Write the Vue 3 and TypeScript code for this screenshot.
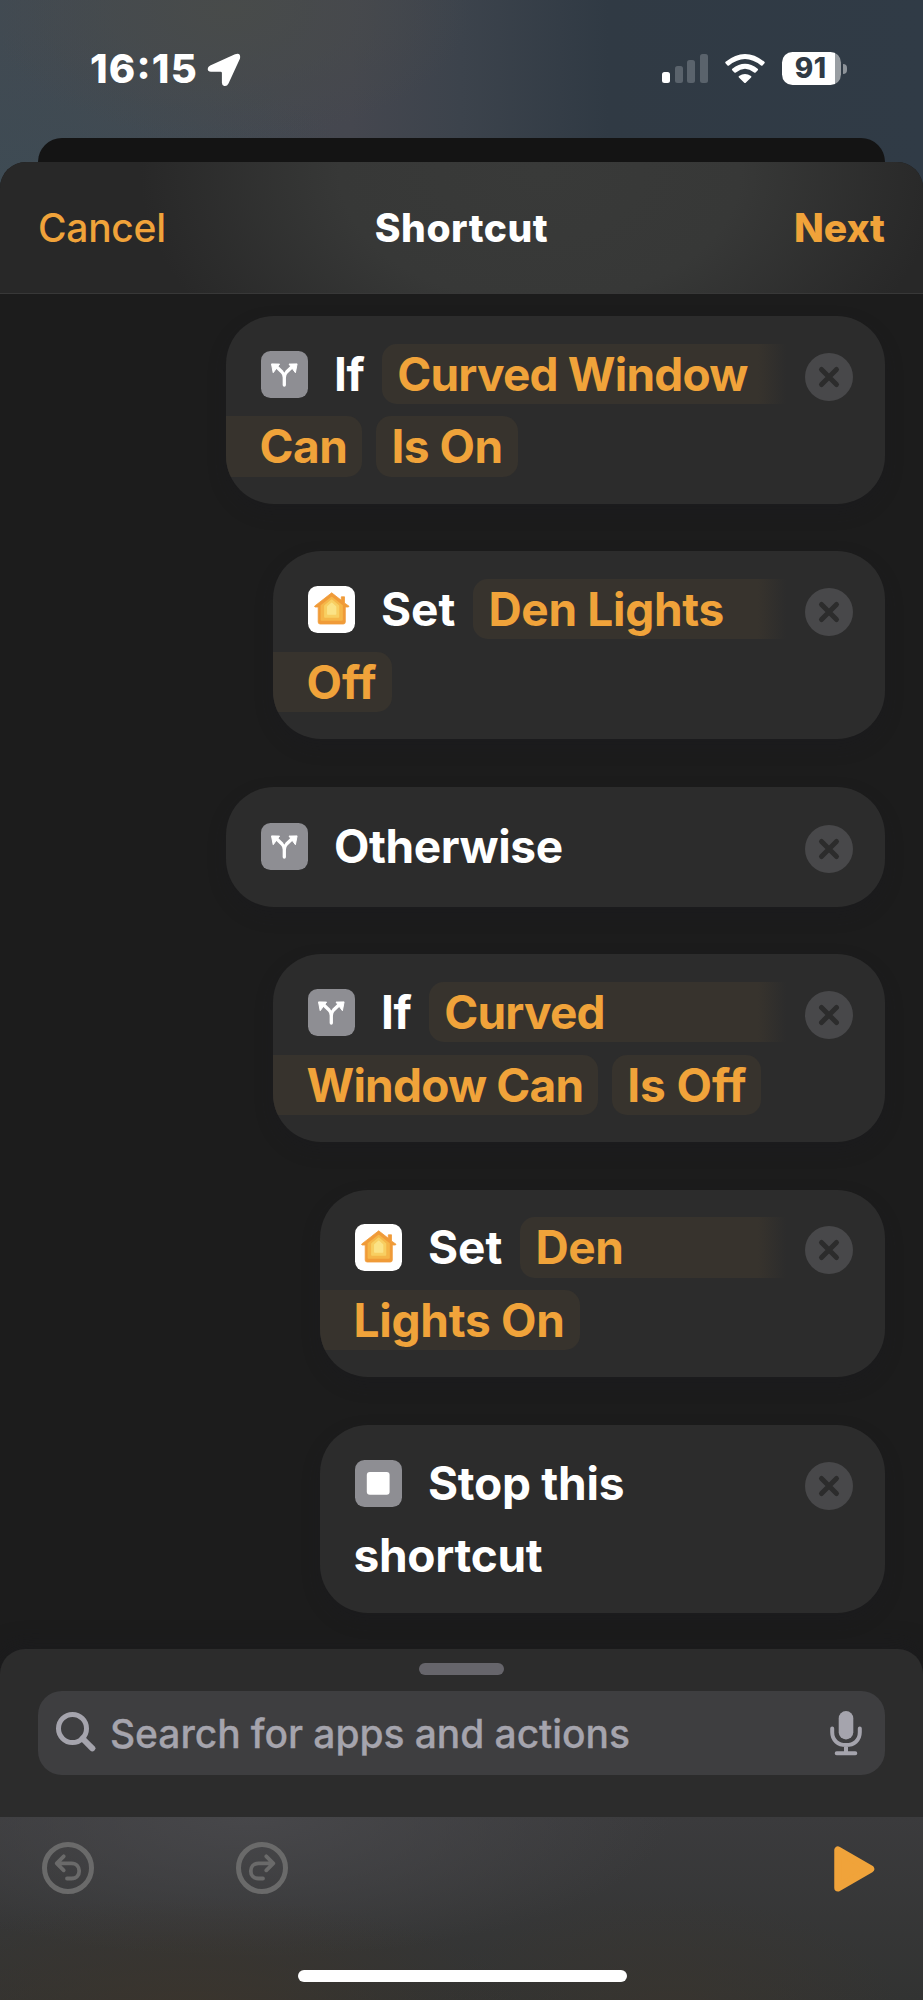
<script setup lang="ts">
interface Phrase { text: string; track: number }
interface Card {
  icon: 'branch' | 'home' | 'stop'
  level: number
  label: Phrase
  first?: Phrase
  second?: Phrase
  plain?: Phrase
  tail?: Phrase
}

const p = (text: string, track: number): Phrase => ({ text, track })

const cards: Card[] = [
  { icon: 'branch', level: 0, label: p('If', -0.5), first: p('Curved Window', -0.8), second: p('Can', -0.5), tail: p('Is On', -0.5) },
  { icon: 'home', level: 1, label: p('Set', 0), first: p('Den Lights', -0.3), second: p('Off', 0) },
  { icon: 'branch', level: 0, label: p('Otherwise', -0.4) },
  { icon: 'branch', level: 1, label: p('If', -0.5), first: p('Curved', -0.8), second: p('Window Can', -0.8), tail: p('Is Off', -0.1) },
  { icon: 'home', level: 2, label: p('Set', 0), first: p('Den', -0.4), second: p('Lights On', -0.25) },
  { icon: 'stop', level: 2, label: p('Stop this', -0.25), plain: p('shortcut', -0.3) },
]
const bars = [11, 17, 23, 29]
const spacing = (x: Phrase) => ({ letterSpacing: x.track + 'px' })
</script>

<template>
  <div class="screen">
    <div class="status">
      <span class="time">16:15</span>
      <svg class="loc" viewBox="0 0 34 34"><path d="M3.200 12.500 28 1.200Q34-1 33 5.400L21.500 30.500Q20 33.600 17.200 33 14.900 32.400 14.900 29.800V20Q14.900 18.800 13.700 18.800H4Q.8 18.600.7 16 .7 13.800 3.200 12.500Z" fill="#fff"/></svg>
      <div class="signal"><i v-for="(h, i) in bars" :key="h" :class="{ on: i === 0 }" :style="{ height: h + 'px' }"></i></div>
      <svg class="wifi" viewBox="0 0 40 29">
        <path d="M.6 7.800Q20-7.800 39.400 7.800 40.200 8.500 39.500 9.300L37.500 11.400Q36.800 12 36 11.400 20-1.600 4 11.400 3.200 12 2.500 11.400L.5 9.300Q-.2 8.500.6 7.800Z" fill="#fff"/>
        <path d="M7.300 14.800Q20 4.800 32.700 14.800 33.500 15.500 32.800 16.300L30.600 18.400Q29.900 19 29.100 18.400 20 11.200 10.900 18.400 10.100 19 9.400 18.400L7.200 16.300Q6.500 15.500 7.300 14.800Z" fill="#fff"/>
        <path d="M14 21.900Q20 18 26 21.900 26.800 22.600 26.100 23.400L21 28.400Q20 29.400 19 28.400L13.900 23.400Q13.200 22.600 14 21.900Z" fill="#fff"/>
      </svg>
      <div class="battery"><span>91</span></div>
      <i class="nub"></i>
    </div>
    <div class="behind"></div>
    <main class="sheet">
      <header class="nav">
        <span class="cancel">Cancel</span>
        <span class="title">Shortcut</span>
        <span class="next">Next</span>
      </header>

      <section class="flow">
        <article v-for="(c, n) in cards" :key="n" class="card" :class="['l' + c.level, { short: !c.second && !c.plain }]">
          <div class="row">
            <svg class="icon" viewBox="0 0 47 47">
              <template v-if="c.icon === 'branch'">
                <rect width="47" height="47" rx="9.500" fill="#8e8e93"/>
                <path d="M23.300 34V26.500Q23.300 23.500 21 21L15 15.300M23.300 26.500Q23.300 23.500 25.600 21L31.600 15.300" fill="none" stroke="#fff" stroke-width="3.300" stroke-linecap="round"/>
                <path d="M10.500 12.900 18.600 13.100 12.200 21.700ZM36.100 12.900 28 13.100 34.400 21.700Z" fill="#fff" stroke="#fff" stroke-width="1" stroke-linejoin="round"/>
              </template>
              <template v-else-if="c.icon === 'home'">
                <rect width="47" height="47" rx="9.500" fill="#fff"/>
                <path d="M33.300 10.800H36.500V17L41 20.200 40.500 21H37.300V36Q37.300 38 35.300 38H12.200Q10.200 38 10.200 36V21H7L6.500 20.200 23.700 6.800 33.300 14.300Z" fill="#f09b38" stroke="#f09b38" stroke-width=".8" stroke-linejoin="round"/>
                <path d="M23.700 11.800 33.800 19.700V33.800H13.600V19.700Z" fill="#f5b648" stroke="#f5b648" stroke-width="2" stroke-linejoin="round"/>
                <path d="M23.700 14.200 30.500 19.800V31H16.900V19.800Z" fill="#f8cf62" stroke="#f8cf62" stroke-width="1.500" stroke-linejoin="round"/>
                <path d="M23.700 17.200 27.600 20.800V28H19.800V20.800Z" fill="#fbe386" stroke="#fbe386" stroke-width="1.500" stroke-linejoin="round"/>
              </template>
              <template v-else>
                <rect width="47" height="47" rx="9.500" fill="#8e8e93"/>
                <rect x="11.800" y="12" width="22.800" height="22.800" rx="3" fill="#fff"/>
              </template>
            </svg>
            <span class="label" :style="spacing(c.label)">{{ c.label.text }}</span>
            <span v-if="c.first" class="tag open" :style="spacing(c.first)">{{ c.first.text }}</span>
            <svg class="remove" viewBox="0 0 48 48"><circle cx="24" cy="24" r="24" fill="#48484a"/><path d="M16.500 16.500 31.500 31.500M31.500 16.500 16.500 31.500" stroke="#2c2c2c" stroke-width="5" stroke-linecap="round"/></svg>
          </div>
          <div v-if="c.second" class="row">
            <span class="tag close" :style="spacing(c.second)">{{ c.second.text }}</span>
            <span v-if="c.tail" class="tag" :style="spacing(c.tail)">{{ c.tail.text }}</span>
          </div>
          <div v-if="c.plain" class="row"><span class="plain" :style="spacing(c.plain)">{{ c.plain.text }}</span></div>
        </article>
      </section>

      <section class="drawer">
        <i class="handle"></i>
        <div class="search">
          <svg class="glass" viewBox="0 0 40 40"><circle cx="16.500" cy="16.500" r="14" fill="none" stroke="#a5a4ad" stroke-width="5"/><path d="M26.500 26.500 36.300 36.300" stroke="#a5a4ad" stroke-width="6" stroke-linecap="round"/></svg>
          <span class="hint">Search for apps and actions</span>
          <svg class="mic" viewBox="0 0 32 45"><rect x="8.700" y="0" width="14.600" height="28.500" rx="7.300" fill="#a5a4ad"/><path d="M2.200 17.500V21.300C2.200 29.300 8 34 16 34S29.800 29.300 29.800 21.300V17.500M16 34V41M6.700 42.200H25.300" fill="none" stroke="#a5a4ad" stroke-width="4" stroke-linecap="round"/></svg>
        </div>
      </section>

      <footer class="tools">
        <svg class="tool" viewBox="0 0 52 52"><g fill="none" stroke="#6a6a6a" stroke-linecap="round" stroke-linejoin="round"><circle cx="26" cy="26" r="23.500" stroke-width="5"/><path d="M21.700 14.300 14.700 21.300 21.700 28.300M15.500 21.300H29.500C34.700 21.300 37.200 25 37.200 29S34.700 36.500 29.500 36.500H25" stroke-width="3.800"/></g></svg>
        <svg class="tool redo" viewBox="0 0 52 52"><g fill="none" stroke="#6a6a6a" stroke-linecap="round" stroke-linejoin="round"><circle cx="26" cy="26" r="23.500" stroke-width="5"/><path d="M30.300 14.300 37.300 21.300 30.300 28.300M36.500 21.300H22.500C17.300 21.300 14.800 25 14.800 29S17.300 36.500 22.500 36.500H27" stroke-width="3.800"/></g></svg>
        <svg class="play" viewBox="0 0 41 46"><path d="M4 4.200V41.800L36.500 23Z" fill="#f0a33a" stroke="#f0a33a" stroke-width="7.500" stroke-linejoin="round"/></svg>
        <i class="homebar"></i>
      </footer>
    </main>
  </div>
</template>

<style>
body { margin: 0; background: #1c1c1c; }
</style>

<style scoped>
.screen {
  position: relative; width: 923px; height: 2000px; overflow: hidden; display: flex; flex-direction: column;
  font-family: Inter, "Liberation Sans", sans-serif; font-feature-settings: "calt" 0, "liga" 0; color: #fff; white-space: nowrap;
  background:
    radial-gradient(ellipse 240px 130px at 230px 10px, #484b4a 0, rgba(72, 75, 74, 0) 100%),
    radial-gradient(ellipse 360px 160px at 0 190px, #3e4b54 0, rgba(62, 75, 84, 0) 100%),
    linear-gradient(90deg, #414a52 0, #444950 22%, #45474f 38%, #3c434c 50%, #303a44 66%, #303b46 100%) #3a434c;
}
.status { height: 138px; flex: none; display: flex; align-items: flex-start; box-sizing: border-box; }
.time { margin: 44px 0 0 90px; width: 117px; font-size: 40px; line-height: 50px; font-weight: 800; letter-spacing: 1.200px; font-feature-settings: "calt" 1; }
.loc { width: 34px; height: 34px; margin-top: 53px; }
.signal { display: flex; align-items: flex-end; gap: 4.300px; height: 29px; margin: 54px 0 0 421px; }
.signal i { width: 8.300px; border-radius: 2.500px; background: #5a636c; }
.signal i.on { background: #fff; }
.wifi { width: 40px; height: 29px; margin: 54px 0 0 17px; }
.battery { width: 59px; height: 33px; margin: 52px 0 0 17px; border-radius: 10.500px; background: linear-gradient(90deg, #fff 53px, #989da2 53px); text-align: center; }
.battery span { display: block; width: 57px; font-size: 28px; line-height: 33px; font-weight: 800; letter-spacing: .5px; color: #303a45; }
.nub { width: 3.500px; height: 10px; margin: 64px 0 0 2px; border-radius: 0 5px 5px 0; background: #8d9399; }
.behind { flex: none; height: 48px; margin: 0 38px -24px; border-radius: 24px 24px 0 0; background: #141414; }
.sheet { position: relative; flex: 1; display: flex; flex-direction: column; border-radius: 26px 26px 0 0; overflow: hidden; background: #1c1c1c; }
.nav {
  flex: none; height: 132px; box-sizing: border-box; border-bottom: 1.500px solid #383838; padding: 0 38px; display: flex; align-items: center;
  justify-content: space-between; font-size: 39px; line-height: 48px;
  background: radial-gradient(ellipse 400px 260px at 540px 10px, #393a39 0, #373837 50%, rgba(40, 40, 40, 0) 100%), #282828;
}
.cancel, .next { width: 180px; color: #f0a33a; }
.cancel { font-weight: 500; letter-spacing: -.3px; }
.title { font-weight: 800; letter-spacing: .5px; }
.next { font-weight: 800; text-align: right; letter-spacing: 0; }
.flow { flex: none; height: 1355px; box-sizing: border-box; padding: 22px 38px 0; display: flex; flex-direction: column; align-items: flex-end; gap: 47.400px; }
.card {
  flex: none; position: relative; height: 187.900px; box-sizing: border-box; border-radius: 48px; overflow: hidden; background: #2c2c2c;
  padding: 27.500px 0 0 35px; display: flex; flex-direction: column; gap: 12.300px; font-size: 46px; line-height: 60px; font-weight: 650;
  box-shadow: 0 8px 18px rgba(26, 26, 32, .3);
}
.l0 { width: 659px; }
.l1 { width: 612px; }
.l2 { width: 565px; }
.short { height: 120.300px; padding-top: 29px; }
.row { display: flex; align-items: center; height: 60.500px; padding-right: 32px; }
.icon { flex: none; width: 47px; height: 47px; margin-top: 1px; }
.label { margin-left: 26px; }
.tag { border-radius: 15px; background: #37332d; color: #f0a33a; padding: 0 15px; height: 60.500px; }
.open { flex: 1; margin-left: 18px; border-radius: 15px 0 0 15px; background: linear-gradient(90deg, #37332d calc(100% - 28px), #2c2c2c); }
.close { margin: 0 14px 0 -35px; padding-left: 33.500px; border-radius: 0 15px 15px 0; }
.plain { margin-left: -1.500px; }
.remove { flex: none; width: 48px; height: 48px; margin: 6px 0 0 auto; }
.open + .remove { margin-left: 19px; }
.drawer { flex: none; height: 168px; box-sizing: border-box; border-radius: 25px 25px 0 0; background: #2c2c2c; padding: 14px 38px 0; box-shadow: 0 0 24px rgba(26, 26, 30, .8); }
.handle { display: block; width: 85px; height: 12px; margin: 0 auto 16px; border-radius: 6px; background: #66656b; }
.search { height: 84px; border-radius: 24px; background: #3e3e40; display: flex; align-items: center; padding: 0 23px 0 18px; color: #a5a4ad; }
.glass { width: 40px; height: 40px; margin-right: 14px; margin-top: -3px; }
.hint { flex: 1; margin-top: 2px; font-size: 39px; line-height: 48px; font-weight: 530; letter-spacing: -.07px; -webkit-text-stroke: .3px #a5a4ad; }
.mic { width: 32px; height: 45px; }
.tools {
  position: relative; flex: 1; display: flex; align-items: flex-start; padding: 25px 48px 0 42px;
  background:
    radial-gradient(ellipse 330px 110px at 190px 190px, rgba(60, 53, 44, .8), rgba(60, 53, 44, 0)),
    radial-gradient(ellipse 230px 110px at 670px 190px, rgba(58, 53, 46, .7), rgba(58, 53, 46, 0)),
    radial-gradient(ellipse 420px 140px at 250px 0, #47474a, rgba(62, 62, 64, 0)),
    linear-gradient(#3b3b3d, #323332);
}
.tool { width: 52px; height: 52px; }
.redo { margin-left: 142.300px; }
.play { width: 41px; height: 46px; margin: 4px 0 0 auto; }
.homebar { position: absolute; left: 297.500px; bottom: 18.500px; width: 329px; height: 12px; border-radius: 6px; background: #fff; }
</style>
